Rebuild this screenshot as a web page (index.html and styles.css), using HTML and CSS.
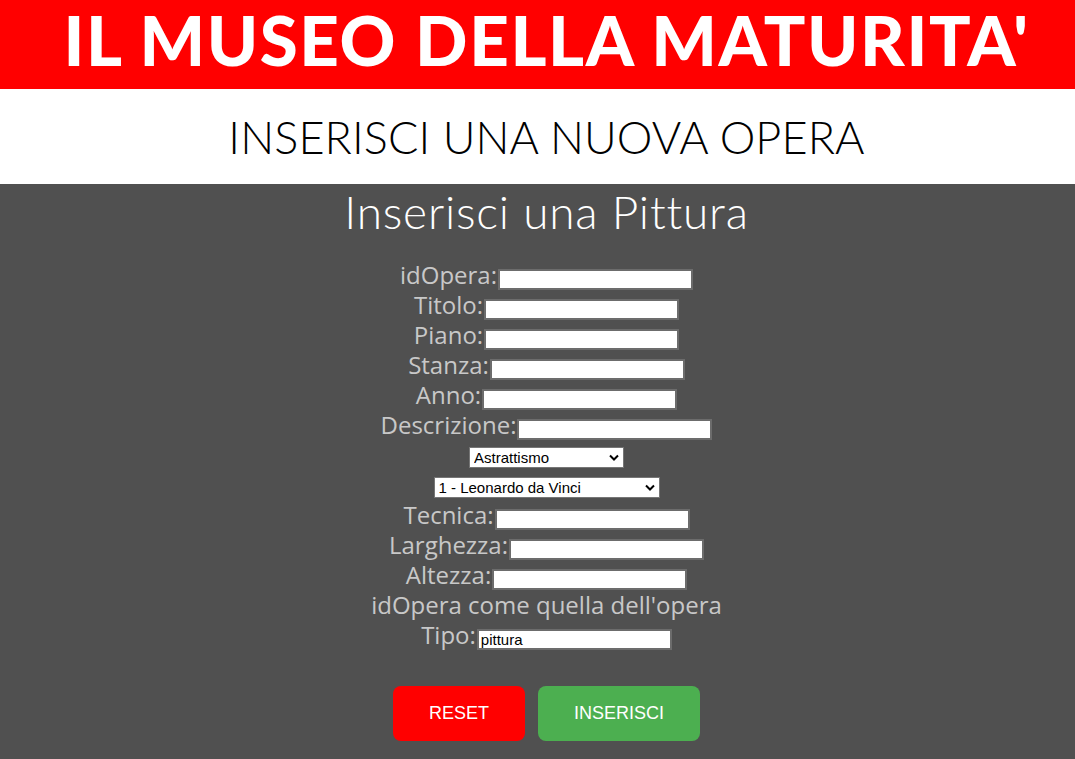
FILE: index.html
```html
<!DOCTYPE html>
<html lang="it">
<head>
<meta charset="utf-8">
<title>Il Museo della Maturità</title>
<link rel="stylesheet" href="styles.css">
</head>
<body>
<header class="brand">
  <h1 class="brand-title">IL MUSEO DELLA MATURITA'</h1>
</header>
<section class="subhead">
  <h2 class="subhead-title">INSERISCI UNA NUOVA OPERA</h2>
</section>
<main class="panel">
  <h3 class="panel-title">Inserisci una Pittura</h3>
  <form class="form">
    <div class="row"><label class="lbl">idOpera:</label><input class="field" type="text"></div>
    <div class="row"><label class="lbl">Titolo:</label><input class="field" type="text"></div>
    <div class="row"><label class="lbl">Piano:</label><input class="field" type="text"></div>
    <div class="row"><label class="lbl">Stanza:</label><input class="field" type="text"></div>
    <div class="row"><label class="lbl">Anno:</label><input class="field" type="text"></div>
    <div class="row"><label class="lbl">Descrizione:</label><input class="field" type="text"></div>
    <div class="row"><select class="sel sel-corrente"><option>Astrattismo</option></select></div>
    <div class="row"><select class="sel sel-autore"><option>1 - Leonardo da Vinci</option></select></div>
    <div class="row"><label class="lbl">Tecnica:</label><input class="field" type="text"></div>
    <div class="row"><label class="lbl">Larghezza:</label><input class="field" type="text"></div>
    <div class="row"><label class="lbl">Altezza:</label><input class="field" type="text"></div>
    <div class="row"><span class="lbl">idOpera come quella dell'opera</span></div>
    <div class="row"><label class="lbl">Tipo:</label><input class="field field-tipo" type="text" value="pittura"></div>
    <div class="actions">
      <button class="btn btn-reset" type="reset">RESET</button>
      <button class="btn btn-submit" type="submit">INSERISCI</button>
    </div>
  </form>
</main>
</body>
</html>
```

FILE: styles.css
```css
html, body {
  margin: 0;
  padding: 0;
  background: #505050;
  height: 100%;
}

.brand {
  background: #ff0000;
  height: 89px;
  padding-left: 18px;
  padding-bottom: 10px;
  box-sizing: border-box;
  display: flex;
  align-items: center;
  justify-content: center;
}

.brand-title {
  margin: 0;
  color: #ffffff;
  font-family: "Lato", "DejaVu Sans", sans-serif;
  font-weight: 900;
  font-size: 69px;
  line-height: 72px;
  letter-spacing: 1.6px;
  white-space: nowrap;
}

.subhead {
  background: #ffffff;
  height: 95px;
  padding-left: 18px;
  box-sizing: border-box;
  display: flex;
  align-items: center;
  justify-content: center;
}

.subhead-title {
  margin: 0;
  color: #000000;
  font-family: "Lato", "DejaVu Sans", sans-serif;
  font-weight: 300;
  font-size: 45px;
  letter-spacing: 0.1px;
  line-height: 54px;
}

.panel {
  background: #505050;
  padding-top: 3px;
  padding-left: 18px;
  text-align: center;
}

.panel-title {
  margin: 0;
  color: #ffffff;
  font-family: "Lato", "DejaVu Sans", sans-serif;
  font-weight: 300;
  font-size: 46px;
  letter-spacing: 0.8px;
  line-height: 50px;
}

.form {
  margin-top: 25px;
  display: flex;
  flex-direction: column;
  align-items: center;
}

.row {
  height: 30px;
  display: flex;
  align-items: center;
  justify-content: center;
}

.lbl {
  color: #c8c8c8;
  font-family: "Open Sans", "DejaVu Sans", sans-serif;
  font-size: 24px;
  line-height: 30px;
  position: relative;
  top: -2px;
}

.field {
  box-sizing: border-box;
  width: 195px;
  height: 21px;
  margin: 5px 0 0 1px;
  border: 2px solid #6c6c6c;
  background: #ffffff;
  padding: 1px 2px;
  font-family: "Liberation Sans", Arial, sans-serif;
  font-size: 15px;
  color: #000000;
}

.sel {
  box-sizing: border-box;
  height: 21px;
  border: 1px solid #767676;
  background-color: #ffffff;
  background-image: url("data:image/svg+xml;utf8,<svg xmlns='http://www.w3.org/2000/svg' width='10' height='7' viewBox='0 0 10 7'><path d='M1 1.5 L5 5.5 L9 1.5' fill='none' stroke='black' stroke-width='2'/></svg>");
  background-repeat: no-repeat;
  background-position: right 4px center;
  background-size: 10px 7px;
  -webkit-appearance: none;
  appearance: none;
  padding: 0 18px 0 4px;
  font-family: "Liberation Sans", Arial, sans-serif;
  font-size: 15px;
  color: #000000;
  border-radius: 0;
}

.sel-corrente {
  width: 155px;
}

.sel-autore {
  width: 226px;
}

.actions {
  margin-top: 34px;
  display: flex;
  gap: 13px;
  justify-content: center;
}

.btn {
  border: none;
  border-radius: 8px;
  color: #ffffff;
  font-family: "Liberation Sans", Arial, sans-serif;
  font-size: 18px;
  height: 55px;
  cursor: pointer;
}

.btn-reset {
  background: #ff0000;
  width: 132px;
}

.btn-submit {
  background: #4caf50;
  width: 162px;
}
```
